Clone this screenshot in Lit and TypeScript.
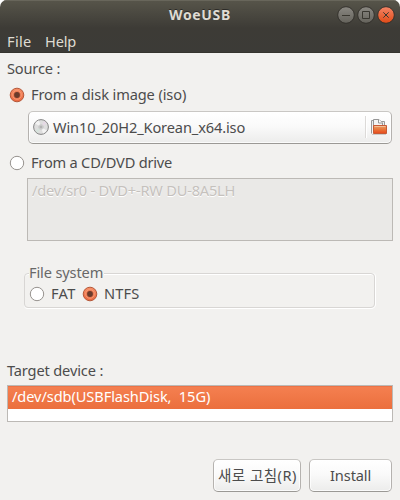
import { LitElement, html, css, svg } from "lit";
import { customElement, property } from "lit/decorators.js";
import { classMap } from "lit/directives/class-map.js";

/** Single-line label whose tracking is adjusted to span a given width. */
@customElement("ui-label")
class UiLabel extends LitElement {
  @property() text = "";
  @property({ type: Number }) span = 0;

  static styles = css`
    :host { display: block; white-space: pre; line-height: var(--label-line, 18px); height: 20px; flex: none; }
    .run { display: inline-block; }
  `;

  updated() {
    const run = this.renderRoot.querySelector(".run") as HTMLElement;
    run.style.letterSpacing = "0px";
    const natural = run.getBoundingClientRect().width;
    const gaps = Math.max(1, this.text.length - 1);
    run.style.letterSpacing = `${(this.span + 0.3 - natural) / gaps}px`;
    this.style.width = `${this.span}px`;
  }

  render() {
    return html`<span class="run">${this.text}</span>`;
  }
}

@customElement("ui-radio")
class UiRadio extends LitElement {
  @property({ type: Boolean }) checked = false;

  static styles = css`
    :host { display: block; width: 16px; height: 16px; flex: none; }
    svg { display: block; }
  `;

  render() {
    return html`<svg width="16" height="16" viewBox="0 0 16 16">
      <defs>
        <linearGradient id="on" x1="0" y1="0" x2="0" y2="1">
          <stop offset="0" stop-color="#f69068" /><stop offset="1" stop-color="#ea6840" />
        </linearGradient>
      </defs>
      ${this.checked
        ? svg`<circle cx="8" cy="8" r="6.8" fill="url(#on)" stroke="#b4583a" />
            <circle cx="8" cy="8" r="4.3" fill="#e8714a" stroke="#f7a27e" stroke-width=".8" />
            <circle cx="8" cy="8" r="2.9" fill="#6b3b2b" />`
        : svg`<circle cx="8" cy="8" r="6.7" fill="#fff" stroke="#96928e" />`}
    </svg>`;
  }
}

@customElement("app-root")
class AppRoot extends LitElement {
  static styles = css`
    :host {
      display: block; width: 400px; height: 500px; background: #fff;
      font: 14.6px "Noto Sans", "Noto Sans CJK KR", sans-serif; color: #4c4c4c;
    }
    * { box-sizing: border-box; }
    svg { display: block; flex: none; }
    .window {
      display: flex; flex-direction: column; height: 500px; overflow: hidden;
      background: #f2f1ef; border-radius: 7px 7px 0 0;
    }
    .chrome {
      height: 53px; flex: none; color: #dfdbd2;
      background: linear-gradient(#57554a, #3d3b36 28px, #3c3b37);
      border-bottom: 1px solid #35342f; box-shadow: inset 0 1px #68665b;
    }
    .titlebar {
      --label-line: 20px;
      height: 30px; display: grid; grid-template-columns: 1fr auto; align-items: center;
      padding: 0 5px 0 169px; font-size: 14px; font-weight: 700; text-shadow: 0 -1px #2c2b28;
    }
    .controls { display: flex; gap: 2px; }
    .menubar { --label-line: 20px; display: flex; gap: 14px; height: 23px; padding: 1px 0 0 7px; }
    .body { flex: 1; display: flex; flex-direction: column; padding: 6px 7px 8px; }
    .option { display: flex; align-items: center; gap: 6px; height: 20px; padding-left: 2px; }
    .first { margin-top: 6px; }
    .second { margin-top: 9px; }
    .button {
      display: flex; align-items: center; justify-content: center; height: 33px;
      border: 1px solid #b9b6b2; border-color: #c9c7c4 #b5b2af #9b9995; border-radius: 5px;
      background: linear-gradient(#fff, #fafafa 45%, #ececeb);
      box-shadow: inset 0 0 0 1px rgba(255, 255, 255, .75);
    }
    .chooser { --label-line: 20px; margin: 6px 1px 0 21px; justify-content: flex-start; padding: 0 4px 1px 4px; gap: 4px; }
    .divider { margin-left: auto; width: 2px; height: 22px; background: #dcdad8; border-right: 1px solid #fff; }
    .list { border: 1px solid #bcb9b5; background: #fff; }
    .disabled {
      margin: 5px 0 0 20px; height: 63px; background: #eae9e7; color: #c5c1bd;
      padding: 2px 4px; text-shadow: 0 1px #fff;
    }
    .group {
      margin: 22px 18px 0 17px; height: 45px;
      display: grid; grid-template-columns: 5px auto 1fr; grid-template-rows: 10px 35px;
    }
    .outline {
      grid-area: 2 / 1 / 3 / 4; border: 1px solid #d8d6d4; border-radius: 4px;
      box-shadow: 0 1px #fff, 1px 0 #fff, inset 0 1px #fff; padding: 10px 0 0 4px;
      display: flex; align-items: flex-start; gap: 7px;
    }
    .legend { grid-area: 1 / 2; background: #f2f1ef; height: 20px; z-index: 1; color: #686868; width: 75px; }
    .choice { display: flex; align-items: center; gap: 6px; height: 20px; }
    .target { margin-top: 53px; }
    .devices { margin-top: 4px; height: 37px; }
    .row { height: 23px; padding: 1px 4px; }
    .selected { background: linear-gradient(#f58051, #eb6f3d); color: #fff; box-shadow: inset 0 1px #ec7347; }
    .actions { margin-top: auto; display: flex; justify-content: flex-end; gap: 8px; padding-right: 1px; }
    .refresh { width: 88px; }
    .install { width: 83px; }
  `;

  private control(kind: string) {
    const close = kind === "close";
    return html`<svg width="18" height="18" viewBox="0 0 18 18">
      <defs><linearGradient id=${`face-${kind}`} x1="0" y1="0" x2="0" y2="1">
        <stop offset="0" stop-color=${close ? "#f48567" : "#8a8882"} />
        <stop offset="1" stop-color=${close ? "#df4a16" : "#64625b"} />
      </linearGradient></defs>
      <circle cx="9" cy="9" r="8.3" fill=${`url(#face-${kind})`} stroke="#302e29" stroke-width=".9" />
      <path fill="none" stroke="#393730" stroke-width="1" d=${
        kind === "min" ? "M5 9.5h8" : kind === "max" ? "M5.5 5.5h7v7h-7z" : "M6.3 6.3l5.4 5.4M11.7 6.3l-5.4 5.4"} />
    </svg>`;
  }

  private disc() {
    return html`<svg width="16" height="16" viewBox="0 0 16 16">
      <circle cx="8" cy="8" r="7.4" fill="#dedede" stroke="#858585" />
      <path d="M8 8L2.2 4.4A6.8 6.8 0 0 1 6 1.5zM8 8l5.8 3.6a6.8 6.8 0 0 1-3.8 2.9z" fill="#f3f3f3" />
      <path d="M8 8l3-6a6.8 6.8 0 0 1 2.7 2.4z" fill="#e5d9e5" />
      <path d="M8 8l-3 6a6.8 6.8 0 0 1-2.7-2.4z" fill="#d6e2dc" />
      <circle cx="8" cy="8" r="2.3" fill="#eee" stroke="#b5b5b5" stroke-width=".6" />
      <circle cx="8" cy="8" r="1.1" fill="#fff" stroke="#777" stroke-width=".7" />
    </svg>`;
  }

  private folder() {
    return html`<svg width="16" height="16" viewBox="0 0 16 16">
      <defs><linearGradient id="fold" x1="0" y1="0" x2="0" y2="1">
        <stop offset="0" stop-color="#eaa06e" /><stop offset=".45" stop-color="#e87b3e" /><stop offset="1" stop-color="#e9481b" />
      </linearGradient></defs>
      <path d="M.5 14.5V1.5h2M9 2.5h4.5V7" fill="#eee" stroke="#999" />
      <path d="M2.5 9V.5H8l3.5 3.5V8" fill="#f4f4f4" stroke="#969696" />
      <path d="M7.5.5V4h4" fill="#fff" stroke="#969696" />
      <path d="M2.5 6.5h13v8h-13z" fill="url(#fold)" stroke="#c75a35" />
      <path d="M3.5 7.5h11" stroke="#f3bd93" />
      <path d="M1 15.5h14" stroke="#b5b0ac" stroke-width=".6" />
    </svg>`;
  }

  private label(text: string, span: number) {
    return html`<ui-label .text=${text} .span=${span}></ui-label>`;
  }

  render() {
    const devices = [{ name: "/dev/sdb(USBFlashDisk,  15G)", span: 198, selected: true }];
    return html`
      <div class="window">
        <header class="chrome">
          <div class="titlebar">
            ${this.label("WoeUSB", 61)}
            <div class="controls">${["min", "max", "close"].map((k) => this.control(k))}</div>
          </div>
          <nav class="menubar">${this.label("File", 24)}${this.label("Help", 31)}</nav>
        </header>
        <main class="body">
          ${this.label("Source :", 53)}
          <div class="option first"><ui-radio checked></ui-radio>${this.label("From a disk image (iso)", 155)}</div>
          <div class="button chooser">
            ${this.disc()}${this.label("Win10_20H2_Korean_x64.iso", 192)}
            <span class="divider"></span>${this.folder()}
          </div>
          <div class="option second"><ui-radio></ui-radio>${this.label("From a CD/DVD drive", 141)}</div>
          <div class="list disabled">${this.label("/dev/sr0 - DVD+-RW DU-8A5LH", 203)}</div>
          <section class="group">
            <div class="legend">${this.label("File system", 74)}</div>
            <div class="outline">
              <div class="choice"><ui-radio></ui-radio>${this.label("FAT", 24)}</div>
              <div class="choice"><ui-radio checked></ui-radio>${this.label("NTFS", 35)}</div>
            </div>
          </section>
          <div class="target">${this.label("Target device :", 96)}</div>
          <div class="list devices">
            ${devices.map((d) => html`<div class=${classMap({ row: true, selected: d.selected })}>${this.label(d.name, d.span)}</div>`)}
          </div>
          <footer class="actions">
            <div class="button refresh">${this.label("새로 고침(R)", 78)}</div>
            <div class="button install">${this.label("Install", 41)}</div>
          </footer>
        </main>
      </div>`;
  }
}
